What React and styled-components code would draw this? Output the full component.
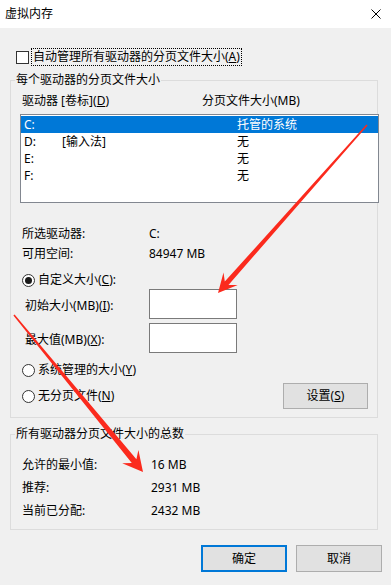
import React from "react";
import styled, { createGlobalStyle } from "styled-components";

const GlobalStyle = createGlobalStyle`
  html, body {
    margin: 0;
    padding: 0;
    background: #f0f0f0;
  }
  body {
    font-family: "Noto Sans", "Noto Sans CJK SC", sans-serif;
    font-size: 12px;
    line-height: 16px;
    color: #000;
  }
`;

const Window = styled.div`
  position: relative;
  width: 391px;
  height: 585px;
  background: #f0f0f0;
  overflow: hidden;
`;

const TitleBar = styled.div`
  height: 28px;
  background: #fff;
  display: flex;
  align-items: center;
  justify-content: space-between;
  padding: 0 10px 0 5px;
  box-sizing: border-box;
`;

const CheckRow = styled.div`
  display: flex;
  align-items: center;
  height: 18px;
  margin-top: 20px;
  padding-left: 16px;
`;

const CheckBox = styled.span`
  width: 11px;
  height: 11px;
  border: 1px solid #333;
  background: #fff;
`;

const FocusLabel = styled.span`
  margin-left: 2px;
  padding: 0 1px;
  border: 1px dotted #000;
  line-height: 16px;
`;

const Group = styled.fieldset`
  margin: ${(p) => p.$top}px 13px 0 10px;
  padding: 0 0 ${(p) => p.$bottom}px 9px;
  border: 1px solid #dcdcdc;
  min-width: 0;
`;

const Legend = styled.legend`
  margin-left: -5px;
  padding: 0 1px;
  line-height: 16px;
`;

const Header = styled.div`
  display: grid;
  grid-template-columns: 180px 1fr;
  margin-top: 5px;
  padding-left: 2px;
`;

const DriveList = styled.div`
  width: 357px;
  height: 86px;
  margin-top: 5px;
  border: 1px solid #828790;
  background: #fff;
  padding-top: 1px;
  box-sizing: content-box;
`;

const DriveRow = styled.div`
  display: grid;
  grid-template-columns: 38px 175px 1fr;
  height: 17px;
  align-items: center;
  padding-left: 3px;
  background: ${(p) => (p.$selected ? "#0078d7" : "transparent")};
  color: ${(p) => (p.$selected ? "#fff" : "#000")};
`;

const InfoRow = styled.div`
  display: grid;
  grid-template-columns: ${(p) => p.$col || 127}px 1fr;
  margin-top: ${(p) => p.$top}px;
  padding-left: 2px;
  height: ${(p) => p.$h || 16}px;
  align-items: center;
`;

const RadioRow = styled.div`
  display: flex;
  align-items: center;
  justify-content: space-between;
  margin-top: ${(p) => p.$top}px;
  padding-left: 2px;
  padding-right: 9px;
  height: ${(p) => p.$h || 16}px;
`;

const RadioLabel = styled.span`
  display: flex;
  align-items: center;
  gap: 3px;
`;

const Radio = styled.span`
  position: relative;
  width: 11px;
  height: 11px;
  border: 1px solid #333;
  border-radius: 50%;
  background: #fff;

  &::after {
    content: "";
    display: ${(p) => (p.$checked ? "block" : "none")};
    position: absolute;
    left: 2px;
    top: 2px;
    width: 7px;
    height: 7px;
    border-radius: 50%;
    background: #1a1a1a;
  }
`;

const FieldRow = styled.div`
  display: grid;
  grid-template-columns: 124px 88px;
  align-items: center;
  margin-top: ${(p) => p.$top}px;
  padding-left: 5px;
`;

const FieldLabel = styled.span`
  padding-top: 3px;
`;

const TextBox = styled.div`
  height: 28px;
  border: 1px solid #7a7a7a;
  background: #fff;
`;

const Button = styled.button`
  width: ${(p) => p.$w || 86}px;
  height: ${(p) => p.$h || 27}px;
  padding: 0;
  font: inherit;
  color: #000;
  background: #e1e1e1;
  border: ${(p) => (p.$default ? "2px solid #0078d7" : "1px solid #adadad")};
  box-sizing: border-box;
`;

const Footer = styled.div`
  display: flex;
  justify-content: flex-end;
  gap: 9px;
  margin-top: 15px;
  padding-right: 9px;
`;

const Overlay = styled.svg`
  position: absolute;
  left: 0;
  top: 0;
  pointer-events: none;
`;

function arrowPoints(tail, tip, wTail, wHead, join, wing, half) {
  const dx = tip[0] - tail[0];
  const dy = tip[1] - tail[1];
  const len = Math.hypot(dx, dy);
  const u = [dx / len, dy / len];
  const n = [-u[1], u[0]];
  const at = (d, s) => [tip[0] - u[0] * d + n[0] * s, tip[1] - u[1] * d + n[1] * s];
  const pts = [
    [tail[0] + n[0] * wTail / 2, tail[1] + n[1] * wTail / 2],
    at(join, wHead / 2),
    at(wing, half),
    tip,
    at(wing, -half),
    at(join, -wHead / 2),
    [tail[0] - n[0] * wTail / 2, tail[1] - n[1] * wTail / 2],
  ];
  return pts.map((p) => p.map((v) => v.toFixed(1)).join(",")).join(" ");
}

const drives = [
  { letter: "C:", label: "", size: "托管的系统", selected: true },
  { letter: "D:", label: "[输入法]", size: "无" },
  { letter: "E:", label: "", size: "无" },
  { letter: "F:", label: "", size: "无" },
];

export default function App() {
  return (
    <Window>
      <GlobalStyle />
      <TitleBar>
        <span>虚拟内存</span>
        <svg width="10" height="10" viewBox="0 0 10 10">
          <path d="M0.5 0.5L9.5 9.5M9.5 0.5L0.5 9.5" stroke="#000" strokeWidth="1" />
        </svg>
      </TitleBar>

      <CheckRow>
        <CheckBox />
        <FocusLabel>
          自动管理所有驱动器的分页文件大小(<u>A</u>)
        </FocusLabel>
      </CheckRow>

      <Group $top={6} $bottom={8}>
        <Legend>每个驱动器的分页文件大小</Legend>
        <Header>
          <span>
            驱动器 [卷标](<u>D</u>)
          </span>
          <span>分页文件大小(MB)</span>
        </Header>
        <DriveList>
          {drives.map((d) => (
            <DriveRow key={d.letter} $selected={d.selected}>
              <span>{d.letter}</span>
              <span>{d.label}</span>
              <span>{d.size}</span>
            </DriveRow>
          ))}
        </DriveList>
        <InfoRow $top={23}>
          <span>所选驱动器:</span>
          <span>C:</span>
        </InfoRow>
        <InfoRow $top={4}>
          <span>可用空间:</span>
          <span>84947 MB</span>
        </InfoRow>
        <RadioRow $top={10}>
          <RadioLabel>
            <Radio $checked />
            <span>
              自定义大小(<u>C</u>):
            </span>
          </RadioLabel>
        </RadioRow>
        <FieldRow $top={1}>
          <FieldLabel>
            初始大小(MB)(<u>I</u>):
          </FieldLabel>
          <TextBox />
        </FieldRow>
        <FieldRow $top={4}>
          <FieldLabel>
            最大值(MB)(<u>X</u>):
          </FieldLabel>
          <TextBox />
        </FieldRow>
        <RadioRow $top={9}>
          <RadioLabel>
            <Radio />
            <span>
              系统管理的大小(<u>Y</u>)
            </span>
          </RadioLabel>
        </RadioRow>
        <RadioRow $top={5} $h={26}>
          <RadioLabel>
            <Radio />
            <span>
              无分页文件(<u>N</u>)
            </span>
          </RadioLabel>
          <Button $w={85} $h={26}>
            设置(<u>S</u>)
          </Button>
        </RadioRow>
      </Group>

      <Group $top={8} $bottom={7}>
        <Legend>所有驱动器分页文件大小的总数</Legend>
        <InfoRow $top={11} $h={23} $col={129}>
          <span>允许的最小值:</span>
          <span>16 MB</span>
        </InfoRow>
        <InfoRow $top={0} $h={23} $col={129}>
          <span>推荐:</span>
          <span>2931 MB</span>
        </InfoRow>
        <InfoRow $top={0} $h={23} $col={129}>
          <span>当前已分配:</span>
          <span>2432 MB</span>
        </InfoRow>
      </Group>

      <Footer>
        <Button $default>确定</Button>
        <Button>取消</Button>
      </Footer>

      <Overlay width="391" height="585" viewBox="0 0 391 585">
        <polygon
          points={arrowPoints([367, 125], [218, 293], 1.5, 5, 13, 19, 9.5)}
          fill="#fb2a1d"
        />
        <polygon
          points={arrowPoints([14, 315], [143, 472], 1.5, 6, 14, 20, 10.5)}
          fill="#fb2a1d"
        />
      </Overlay>
    </Window>
  );
}
